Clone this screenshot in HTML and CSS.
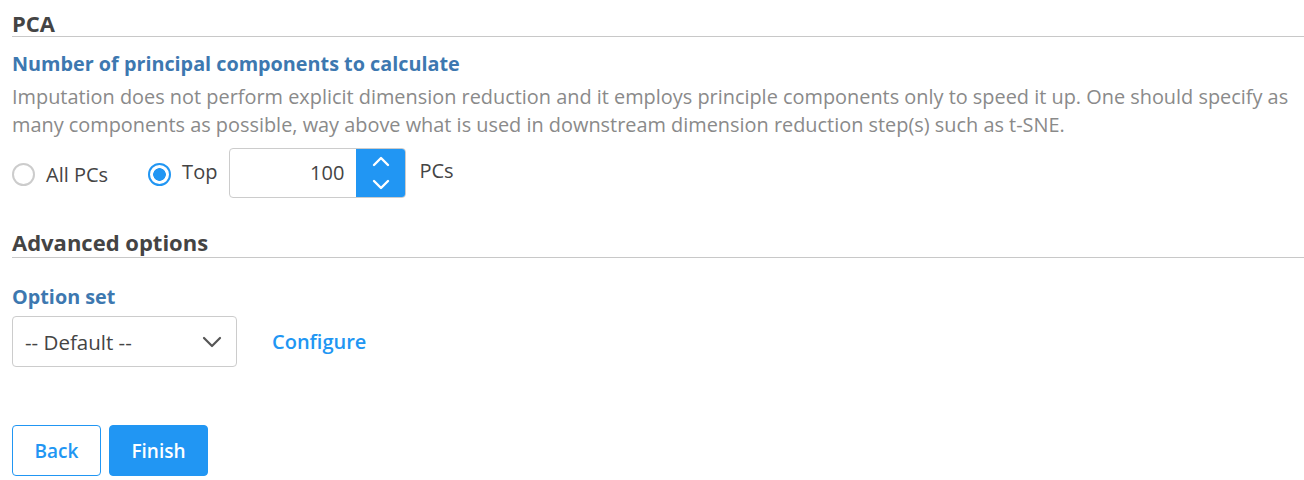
FILE: index.html
```html
<!DOCTYPE html>
<html>
<head>
<meta charset="utf-8">
<link rel="stylesheet" href="styles.css">
</head>
<body>
<div class="page">
  <h2 class="section-title">PCA</h2>
  <div class="field-label">Number of principal components to calculate</div>
  <p class="help">Imputation does not perform explicit dimension reduction and it employs principle components only to speed it up. One should specify as many components as possible, way above what is used in downstream dimension reduction step(s) such as t-SNE.</p>
  <div class="radio-row">
    <label class="radio"><span class="dot"></span><span>All PCs</span></label>
    <label class="radio checked top"><span class="dot"></span><span class="top-text">Top</span></label>
    <div class="spin">
      <div class="spin-value">100</div>
      <div class="spin-btns">
        <svg width="18" height="11" viewBox="0 0 18 11"><path d="M2 9 L9 2 L16 9" fill="none" stroke="#fff" stroke-width="2.4" stroke-linecap="round" stroke-linejoin="round"/></svg>
        <svg width="18" height="11" viewBox="0 0 18 11"><path d="M2 2 L9 9 L16 2" fill="none" stroke="#fff" stroke-width="2.4" stroke-linecap="round" stroke-linejoin="round"/></svg>
      </div>
    </div>
    <span class="pcs top-text">PCs</span>
  </div>

  <h2 class="section-title adv">Advanced options</h2>
  <div class="field-label small">Option set</div>
  <div class="select-row">
    <div class="select">
      <span>-- Default --</span>
      <svg width="20" height="12" viewBox="0 0 20 12"><path d="M2 2 L10 10 L18 2" fill="none" stroke="#555" stroke-width="2.2" stroke-linecap="round" stroke-linejoin="round"/></svg>
    </div>
    <a class="link">Configure</a>
  </div>

  <div class="buttons">
    <button class="btn outline">Back</button>
    <button class="btn primary">Finish</button>
  </div>
</div>
</body>
</html>
```
FILE: styles.css
```css
* { box-sizing: border-box; }
html, body { margin: 0; background: #fff; }
body { font-family: "Open Sans", "Noto Sans", sans-serif; color: #444; }
.page { padding: 0 0 0 12px; }
.section-title {
  margin: 0;
  font-size: 22px;
  font-weight: 700;
  color: #444;
  line-height: 26px;
  padding-top: 10px;
  padding-bottom: 0;
  border-bottom: 1px solid #c8c8c8;
}
.section-title.adv { margin-top: 31px; padding-top: 0; padding-bottom: 2px; }
.field-label {
  margin-top: 13px;
  font-size: 19.8px;
  font-weight: 700;
  color: #3d78b0;
  line-height: 28px;
}
.field-label.small { margin-top: 25px; }
.help {
  margin: 5px 0 0 0;
  font-size: 19.9px;
  line-height: 28px;
  color: #8a8a8a;
  padding-right: 8px;
}
.radio-row {
  display: flex;
  align-items: center;
  margin-top: 9px;
  height: 50px;
}
.radio {
  display: flex;
  align-items: center;
  font-size: 20px;
  color: #444;
  margin-right: 40px;
  position: relative;
  top: 1px;
}
.radio .dot {
  width: 23px; height: 23px;
  border-radius: 50%;
  border: 2px solid #ccc;
  margin-right: 11px;
  display: inline-block;
}
.radio.checked .dot {
  border-color: #2196f3;
  background: radial-gradient(circle, #2196f3 0 6px, #fff 6.6px);
}
.radio.top { margin-right: 12px; }
.top-text { position: relative; top: -3px; }
.spin {
  display: flex;
  width: 177px;
  height: 50px;
  border: 1px solid #ccc;
  border-radius: 4px;
  overflow: hidden;
}
.spin-value {
  flex: 1;
  text-align: right;
  font-size: 20px;
  line-height: 48px;
  padding-right: 12px;
  color: #444;
}
.spin-btns {
  width: 49px;
  background: #2196f3;
  display: flex;
  flex-direction: column;
  align-items: center;
  justify-content: center;
  gap: 12px;
}
.pcs { font-size: 20px; margin-left: 13px; color: #444; }
.select-row {
  display: flex;
  align-items: center;
  margin-top: 5px;
}
.select {
  width: 225px;
  height: 51px;
  border: 1px solid #ccc;
  border-radius: 4px;
  display: flex;
  align-items: center;
  justify-content: space-between;
  padding: 0 14px 0 12px;
  font-size: 20.5px;
  color: #444;
}
.link {
  margin-left: 35px;
  color: #2196f3;
  font-size: 20px;
  font-weight: 600;
}
.buttons {
  display: flex;
  gap: 8px;
  margin-top: 58px;
}
.btn {
  font-family: inherit;
  height: 51px;
  border-radius: 4px;
  font-size: 19px;
  font-weight: 600;
  padding: 0;
}
.btn.outline {
  width: 89px;
  background: #fff;
  border: 1px solid #2196f3;
  color: #2196f3;
}
.btn.primary {
  width: 99px;
  background: #2196f3;
  border: 1px solid #2196f3;
  color: #fff;
}
```
